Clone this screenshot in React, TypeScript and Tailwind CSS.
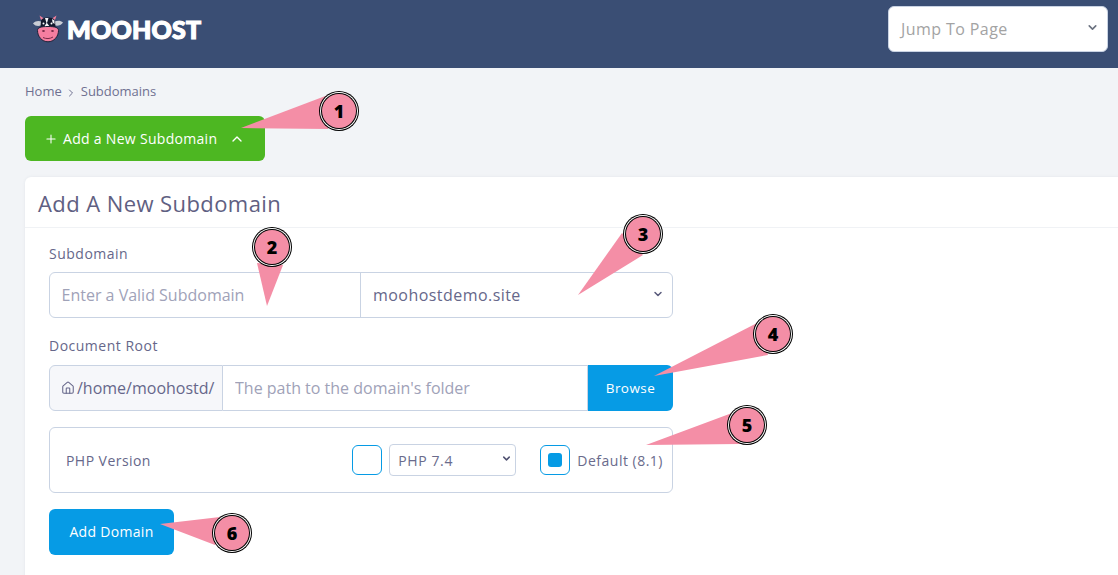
import { ChevronDown, ChevronRight, ChevronUp, Home, Plus } from "lucide-react";

const callouts = [
  { n: "1", c: [339, 111], p: "241,128 328,95 328,129" },
  { n: "2", c: [272, 247], p: "267,306 257,263 283,265" },
  { n: "3", c: [643, 234], p: "578,295 622,233 643,255" },
  { n: "4", c: [773, 334], p: "654,376 757,323 768,355" },
  { n: "5", c: [747, 425], p: "646,445 732,413 740,444" },
  { n: "6", c: [232, 533], p: "160,524 220,517 215,545" },
];

function Cow() {
  return (
    <svg width="32" height="28" viewBox="0 0 32 28" className="shrink-0">
      <path d="M1 8.5C4 5.5 7 5.5 10 7L9 10.5C6 11.5 3 11 1 8.5Z" fill="#c9ced6" />
      <path d="M31 7.5C28 5 25 5.5 22 7L23 10.5C26 11 29 10.5 31 7.5Z" fill="#c9ced6" />
      <path d="M9 5L7.5 0.5L12 3.5Z" fill="#f07f9c" />
      <path d="M23 5L24.5 0.5L20 3.5Z" fill="#f07f9c" />
      <path d="M9 6C10 3 13 2.5 16 2.5C19 2.5 22 3 23 6L23.5 12H8.5Z" fill="#12182c" />
      <path d="M13 3L16.5 3L15 8L18 12H12L14.5 8Z" fill="#f4f5f8" />
      <path d="M20 4L22.5 5.5L22.5 9L20.5 7.5Z" fill="#f4f5f8" />
      <circle cx="11.5" cy="8.5" r="1" fill="#fff" />
      <circle cx="19.5" cy="8.5" r="1" fill="#fff" />
      <path d="M5.5 15.5C5.5 12.5 9 11.5 16 11.5C23 11.5 26.5 12.5 26.5 15.5C26.5 21.5 22 26.8 16 26.8C10 26.8 5.5 21.5 5.5 15.5Z" fill="#f57ea0" stroke="#1b2238" strokeWidth="1" />
      <ellipse cx="11.5" cy="16" rx="1.4" ry="1" fill="#7a2c48" />
      <ellipse cx="20.5" cy="16" rx="1.4" ry="1" fill="#7a2c48" />
      <path d="M11 22.5C14 24 18 24 21 22" fill="none" stroke="#7a2c48" strokeWidth="1" />
    </svg>
  );
}

export default function App() {
  return (
    <div className="relative h-[575px] w-[1118px] overflow-hidden bg-[#f2f4f7] font-['Open_Sans','Noto_Sans',sans-serif] text-[#6a6b8c]">
      <header className="flex h-[68px] items-start justify-between bg-[#3a4e74] pl-[32px] pr-[10px]">
        <div className="flex items-center gap-[3px] pt-[15px]">
          <Cow />
          <span className="font-['Lato',sans-serif] text-[25px] font-black leading-[28px] tracking-[0.2px] text-white [-webkit-text-stroke:1.2px_white]">
            MOOHOST
          </span>
        </div>
        <div className="mt-[6px] flex h-[46px] w-[220px] items-center justify-between rounded-[6px] border border-[#c9d3e3] bg-white pl-[12px] pr-[8px]">
          <span className="text-[16px] tracking-[0.42px] text-[#a3a3a3]">Jump To Page</span>
          <ChevronDown size={13} strokeWidth={3} className="-mt-[3px] text-[#6b7280]" />
        </div>
      </header>

      <main className="pl-[25px]">
        <nav className="mt-[16px] flex h-[16px] items-center text-[13px] text-[#6f7091]">
          <span>Home</span>
          <ChevronRight size={12} strokeWidth={2} className="mx-[3.5px] mt-[2px]" />
          <span>Subdomains</span>
        </nav>

        <button className="mt-[16px] flex h-[45px] w-[240px] items-center rounded-[6px] bg-[#4db722] pl-[19px] text-[14px] tracking-[0.3px] text-white">
          <Plus size={14} strokeWidth={1.8} className="mr-[5px]" />
          <span>Add a New Subdomain</span>
          <ChevronUp size={16} strokeWidth={2} className="ml-[12px]" />
        </button>

        <section className="mt-[16px] w-[1120px] rounded-[6px] bg-white pb-[40px] shadow-[0_0_3px_rgba(120,130,160,0.12)]">
          <h2 className="flex h-[51px] items-center border-b border-[#f0f2f5] pl-[13px] pt-[2px] text-[22px] tracking-[0.42px] text-[#5f6082]">
            Add A New Subdomain
          </h2>

          <div className="w-[648px] pl-[24px]">
            <label className="mt-[16px] block text-[14px] leading-[20px] tracking-[0.5px] text-[#66678a]">Subdomain</label>
            <div className="mt-[8px] flex h-[46px] rounded-[6px] border border-[#c9d3e3]">
              <input
                readOnly
                placeholder="Enter a Valid Subdomain"
                className="w-[311px] border-r border-[#c9d3e3] bg-transparent pl-[11.5px] text-[16px] outline-none placeholder:text-[#a0a2b8]"
              />
              <div className="flex flex-1 items-center justify-between pl-[12px] pr-[8px]">
                <span className="text-[16px] tracking-[0.45px] text-[#66678a]">moohostdemo.site</span>
                <ChevronDown size={12} strokeWidth={3} className="-mt-[3px] text-[#5a5b7c]" />
              </div>
            </div>

            <label className="mt-[18px] block text-[14px] leading-[20px] tracking-[0.5px] text-[#66678a]">Document Root</label>
            <div className="mt-[9px] flex h-[46px]">
              <div className="flex w-[174px] items-center gap-[2px] rounded-l-[6px] border border-[#c9d3e3] bg-[#f6f7fa] pl-[11px] text-[16px] text-[#66678a]">
                <Home size={14} strokeWidth={1.8} />
                <span>/home/moohostd/</span>
              </div>
              <input
                readOnly
                placeholder="The path to the domain's folder"
                className="w-[365px] border-y border-r border-[#c9d3e3] bg-transparent pl-[12px] text-[16px] outline-none placeholder:text-[#a0a2b8]"
              />
              <button className="flex-1 rounded-r-[6px] bg-[#069be5] text-[13.5px] tracking-[0.45px] text-white">Browse</button>
            </div>

            <div className="mt-[16px] flex h-[66px] items-center rounded-[6px] border border-[#c9d3e3] pl-[16px] pr-[9px]">
              <span className="text-[14px] tracking-[0.45px] text-[#66678a]">PHP Version</span>
              <div className="ml-auto flex items-center">
                <span className="h-[30px] w-[30px] rounded-[6px] border border-[#069be5]" />
                <div className="ml-[7px] flex h-[32px] w-[127px] items-center justify-between rounded-[4px] border border-[#c9d3e3] pl-[8px] pr-[3px]">
                  <span className="text-[14px] tracking-[0.6px] text-[#6a6b8c]">PHP 7.4</span>
                  <ChevronDown size={11} strokeWidth={3.2} className="-mt-[4px] text-[#4f5070]" />
                </div>
                <span className="ml-[24px] flex h-[30px] w-[30px] items-center justify-center rounded-[6px] border border-[#069be5]">
                  <span className="h-[14px] w-[14px] rounded-[3px] bg-[#069be5]" />
                </span>
                <span className="ml-[7px] text-[14px] tracking-[0.5px] text-[#6a6b8c]">Default (8.1)</span>
              </div>
            </div>

            <button className="mt-[16px] h-[46px] w-[125px] rounded-[6px] bg-[#069be5] pb-[1px] text-[14px] tracking-[0.3px] text-white">Add Domain</button>
          </div>
        </section>
      </main>

      <svg className="absolute left-0 top-0" width="1118" height="575" viewBox="0 0 1118 575">
        {callouts.map((k) => (
          <g key={k.n}>
            <polygon points={k.p} fill="#f48ea6" />
            <circle cx={k.c[0]} cy={k.c[1]} r="20" fill="#000" />
            <circle cx={k.c[0]} cy={k.c[1]} r="19" fill="#fff" />
            <circle cx={k.c[0]} cy={k.c[1]} r="18" fill="#000" />
            <circle cx={k.c[0]} cy={k.c[1]} r="17" fill="#f48ea6" />
            <text
              x={k.c[0]}
              y={k.c[1] + 6.5}
              textAnchor="middle"
              fontSize="18"
              fontWeight="800"
              fill="#000"
              fontFamily="'Open Sans', sans-serif"
            >
              {k.n}
            </text>
          </g>
        ))}
      </svg>
    </div>
  );
}
